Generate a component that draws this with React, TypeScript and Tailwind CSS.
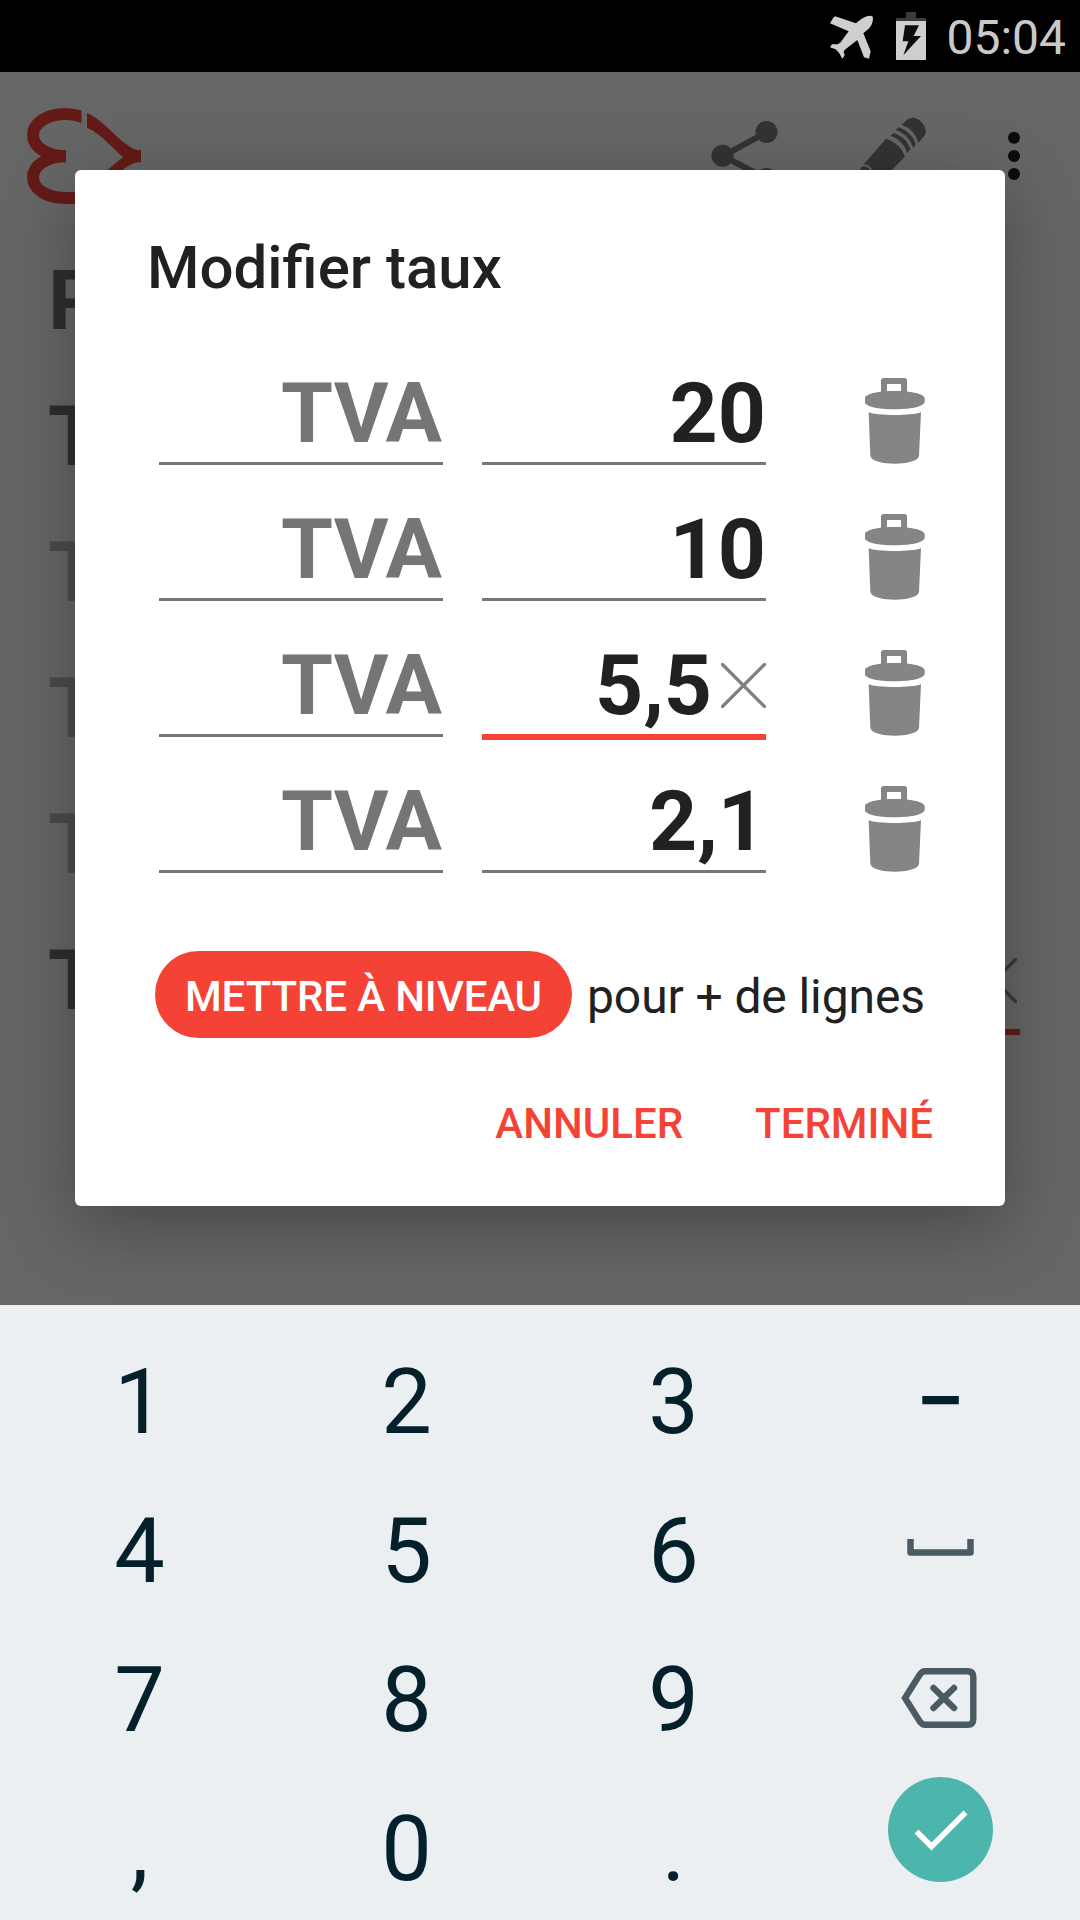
import React from "react";

function StatusBar() {
  return (
    <div className="flex h-[72px] w-full justify-end bg-black">
      <svg className="mt-[11px] mr-[12px] h-[50px] w-[108px]" viewBox="138 30 324 150">
        <path
          d="M279 50 Q279 70 266 83 L250 97 L272 151 L267 173 L252 169 L232 117 L205 138 Q192 147 191 152 L194 163 L187 173 L177 155 L167 145 L150 139 L156 130 L168 130 Q175 131 182 124 L206 91 L150 67 L160 50 L165 46 L228 67 L239 58 Q254 44 273 44 Q279 45 279 50 Z"
          fill="#cfcfcf"
        />
        <rect x="378" y="33" width="30" height="20" fill="#3b3b3b" />
        <rect x="348" y="51" width="90" height="10" fill="#3b3b3b" />
        <rect x="348" y="60" width="90" height="117" fill="#cfcfcf" />
        <path d="M375 73 H417 L401 105 H423 L370 163 L385 121 H368 Z" fill="#0c0c0c" />
      </svg>
      <span className="mt-[10px] mr-[14px] text-[48px] leading-[56px] text-[#c9c9c9]">05:04</span>
    </div>
  );
}

function CrossIcon({ className, color }: { className: string; color: string }) {
  return (
    <svg className={className} viewBox="0 0 45 45" fill="none" stroke={color} strokeWidth="3.2" strokeLinecap="round">
      <path d="M1.5 1.5 L43.5 43.5 M43.5 1.5 L1.5 43.5" />
    </svg>
  );
}

function TrashIcon() {
  return (
    <svg className="mt-[49px] ml-[99px] h-[86px] w-[60px]" viewBox="1215 54 180 258" fill="#858585">
      <path
        fillRule="evenodd"
        d="M1263 100 V62 Q1263 54 1271 54 H1333 Q1341 54 1341 62 V100 Z M1281 72 V96 H1323 V72 Z"
      />
      <path d="M1214 114 C1219 99 1262 93 1304 93 C1346 93 1389 99 1394 114 V127 C1388 142 1346 148 1304 148 C1262 148 1220 142 1214 127 Z" />
      <path d="M1226 157 C1254 168 1354 168 1383 157 L1377 288 C1374 304 1338 311 1304 311 C1270 311 1234 304 1231 288 Z" />
    </svg>
  );
}

function AppHeader() {
  return (
    <div className="flex h-[168px] items-start">
      <svg className="mt-[36px] ml-[27px] h-[96px] w-[114px]" viewBox="81 144 342 288">
        <clipPath id="lobes">
          <path d="M81 144 H245 V250 H198 V330 H245 V432 H81 Z" />
        </clipPath>
        <g fill="none" stroke="#641b17" strokeWidth="36" clipPath="url(#lobes)">
          <path d="M262 177 Q230 162 197 162 C140 162 99 190 99 225 C99 260 140 289 198 289" />
          <path d="M198 289 C140 289 99 317 99 352 C99 388 140 414 197 414 H240" />
        </g>
        <path
          d="M261 159 C300 174 345 228 375 250 Q398 268 410 270 H423 V307 H412 Q390 312 368 330 L300 388 L275 370 L370 290 C345 276 310 224 261 203 Z"
          fill="#641b17"
        />
      </svg>
      <svg className="mt-[45px] ml-[570px] h-[72px] w-[67px]" viewBox="0 0 67 72" fill="#333333">
        <path d="M56 15 L12 39 L56 62" fill="none" stroke="#333333" strokeWidth="6" />
        <circle cx="55.5" cy="15" r="11" />
        <circle cx="11.5" cy="38.7" r="11" />
        <circle cx="55.5" cy="62" r="11" />
      </svg>
      <svg className="mt-[44px] ml-[68px] h-[74px] w-[80px]" viewBox="198 348 240 222" fill="#333333">
        <path d="M365 374 L377 363 C391 350 408 350 422 364 C437 378 442 395 433 408 L415 428 C409 404 392 384 365 374 Z" />
        <path d="M347 390 L356 382 C380 390 402 410 407 434 L399 444 C393 419 374 399 347 390 Z" />
        <path d="M331 407 L342 399 C366 407 387 427 391 448 L381 459 C376 436 358 416 331 407 Z" />
        <path d="M318 416 C345 424 367 445 375 470 L315 530 L270 540 L275 508 Q266 490 250 494 Z" />
        <path d="M244 501 Q258 495 269 507 L262 520 L236 520 Z" />
      </svg>
      <svg className="mt-[58px] ml-[82px] h-[52px] w-[12px]" viewBox="0 0 12 52" fill="#0c0c0c">
        <circle cx="6" cy="7.7" r="6" />
        <circle cx="6" cy="26" r="6" />
        <circle cx="6" cy="44" r="6" />
      </svg>
    </div>
  );
}

const backgroundRows = [
  { label: "P", color: "text-[#2f2f2f] pl-[48px]" },
  { label: "T", color: "text-[#2f2f2f] pl-[48px]" },
  { label: "T", color: "text-[#4b4b4b] pl-[48px]" },
  { label: "T", color: "text-[#4b4b4b] pl-[48px]" },
  { label: "T", color: "text-[#4b4b4b] pl-[48px]" },
  { label: "T", color: "text-[#2f2f2f] pl-[48px]", active: true },
];

function Background() {
  return (
    <div className="h-[1233px]">
      <AppHeader />
      <div className="pt-[11px]">
        {backgroundRows.map((row, i) => (
          <div key={i} className="flex h-[136px] justify-between pr-[60px]">
            <span className={`text-[84px] font-bold leading-[100px] ${row.color}`}>{row.label}</span>
            {row.active && (
              <div className="flex h-[104px] w-[284px] items-start justify-end border-b-6 border-[#641b17]">
                <CrossIcon className="mt-[27px] mr-[3px] size-[45px]" color="#3a3a3a" />
              </div>
            )}
          </div>
        ))}
      </div>
    </div>
  );
}

const rates = [
  { value: "20" },
  { value: "10" },
  { value: "5,5", focused: true },
  { value: "2,1" },
];

function RateRow({ value, focused }: { value: string; focused?: boolean }) {
  return (
    <div className="flex h-[136px] items-start pl-[84px]">
      <div className="mr-[39px] h-[136px] w-[284px] border-b-3 border-[#757575] pt-[35px] pr-px text-right text-[84px] leading-[100px] font-bold text-[#757575]">
        TVA
      </div>
      <div
        className={`flex w-[284px] items-start justify-end pt-[35px] text-[84px] leading-[100px] font-bold text-[#212121] ${
          focused ? "h-[139px] border-b-6 border-[#f44336]" : "h-[136px] border-b-3 border-[#757575]"
        }`}
      >
        {value}
        {focused && <CrossIcon className="mt-[27px] ml-[9px] size-[45px]" color="#808080" />}
      </div>
      <TrashIcon />
    </div>
  );
}

function Dialog() {
  return (
    <div className="absolute top-[170px] left-[75px] h-[1036px] w-[930px] rounded-[6px] bg-white pt-[63px] shadow-[0_20px_72px_rgba(0,0,0,0.3)]">
      <h1 className="pl-[72px] text-[60px] leading-[70px] font-medium text-[#212121]">Modifier taux</h1>
      <div className="mt-[26px]">
        {rates.map((rate) => (
          <RateRow key={rate.value} {...rate} />
        ))}
      </div>
      <div className="mt-[78px] flex h-[87px] items-center pl-[80px]">
        <button className="h-[87px] w-[417px] rounded-full bg-[#f44336] pt-[4px] text-[42px] leading-[48px] font-medium tracking-[-0.12px] whitespace-nowrap text-white">
          METTRE À NIVEAU
        </button>
        <span className="ml-[15px] pt-[4px] text-[48px] leading-[56px] tracking-[-0.1px] whitespace-nowrap text-[#212121]">
          pour + de lignes
        </span>
      </div>
      <div className="mt-[62px] flex justify-end gap-[72px] pr-[72px] text-[42px] leading-[48px] font-medium text-[#f44336]">
        <button>ANNULER</button>
        <button>TERMINÉ</button>
      </div>
    </div>
  );
}

function Digit({ children }: { children: React.ReactNode }) {
  return <div className="text-center text-[90px] leading-[149px] text-[#04202a]">{children}</div>;
}

function Keyboard() {
  return (
    <div className="relative grid h-[615px] auto-rows-[149px] grid-cols-[repeat(4,267px)] overflow-hidden bg-[#ebeff2] pt-[23px] pl-[6px]">
      <Digit>1</Digit>
      <Digit>2</Digit>
      <Digit>3</Digit>
      <div className="text-center text-[88px] leading-[146px] font-medium text-[#04202a]">−</div>
      <Digit>4</Digit>
      <Digit>5</Digit>
      <Digit>6</Digit>
      <div className="flex justify-center">
        <svg className="mt-[61px] h-[18px] w-[67px]" viewBox="0 0 67 18" fill="none" stroke="#4b5b63" strokeWidth="6.5" strokeLinejoin="round">
          <path d="M3.5 1 V14.5 H63.5 V1" />
        </svg>
      </div>
      <Digit>7</Digit>
      <Digit>8</Digit>
      <Digit>9</Digit>
      <div className="flex justify-center">
        <svg className="mt-[42px] mr-[3px] h-[60px] w-[76px]" viewBox="0 0 76 60" fill="none" stroke="#4b5b63" strokeWidth="6.4">
          <path d="M4 30 L18.5 7 Q21 3.2 24 3.2 H66.5 Q72.3 3.2 72.3 9 V51 Q72.3 56.8 66.5 56.8 H24 Q21 56.8 18.5 53 Z" />
          <path d="M32.5 20 L53 40 M53 20 L32.5 40" strokeLinecap="round" />
        </svg>
      </div>
      <Digit>,</Digit>
      <Digit>0</Digit>
      <Digit>.</Digit>
      <div className="flex justify-center">
        <div className="mt-[2px] size-[105px] rounded-full bg-[#4db6ac]">
          <svg className="size-[105px]" viewBox="0 0 105 105" fill="none" stroke="#ffffff" strokeWidth="5.6">
            <path d="M28.5 54.5 L43.5 69.5 L77.5 35.5" />
          </svg>
        </div>
      </div>
    </div>
  );
}

export default function App() {
  return (
    <div className="relative h-[1920px] w-[1080px] overflow-hidden bg-[#666666] font-[Roboto,sans-serif]">
      <StatusBar />
      <Background />
      <Dialog />
      <div className="relative z-10">
        <Keyboard />
      </div>
    </div>
  );
}
